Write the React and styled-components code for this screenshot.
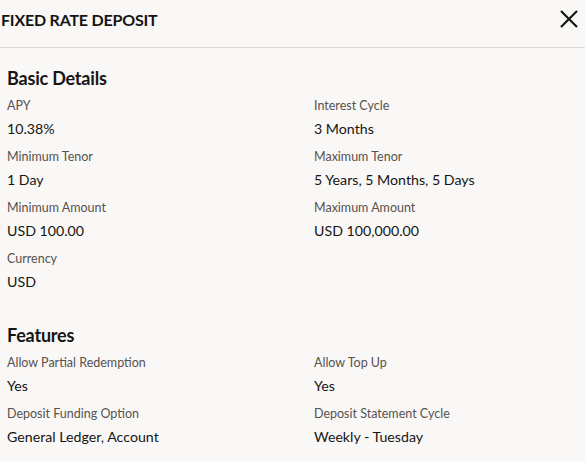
import React from "react";
import styled, { createGlobalStyle } from "styled-components";

const Global = createGlobalStyle`
  html, body { margin: 0; padding: 0; background: #f9f8f6; }
  body { font-family: Lato, "Noto Sans", sans-serif; color: #161513; }
`;

const Panel = styled.div`
  width: 585px;
  height: 462px;
  background: #f9f8f6;
  overflow: hidden;
`;

const Header = styled.div`
  display: flex;
  align-items: center;
  justify-content: space-between;
  box-sizing: border-box;
  height: 48px;
  padding: 0 6px 9px 1px;
  border-bottom: 1px solid #dedcd8;
`;

const Title = styled.h1`
  margin: 0;
  font-size: 16px;
  font-weight: 700;
  letter-spacing: -0.2px;
`;

const CloseButton = styled.button`
  background: none;
  border: none;
  padding: 0;
  width: 20px;
  height: 20px;
  display: flex;
  align-items: center;
  justify-content: center;
  cursor: pointer;
`;

const Body = styled.div`
  padding: 19px 0 0 7px;
`;

const Section = styled.section`
  margin-bottom: 33px;
`;

const SectionTitle = styled.h2`
  margin: 0 0 9px 0;
  font-size: 18px;
  font-weight: 700;
  line-height: 22px;
  letter-spacing: -0.2px;
`;

const Grid = styled.div`
  display: grid;
  grid-template-columns: 307px 1fr;
  row-gap: 11px;
`;

const Field = styled.div`
  display: flex;
  flex-direction: column;
  gap: 6px;
`;

const Label = styled.div`
  font-size: 12.5px;
  line-height: 16px;
  color: #57524e;
`;

const Value = styled.div`
  font-size: 14.2px;
  line-height: 18px;
  color: #161513;
`;

const basic = [
  ["APY", "10.38%"],
  ["Interest Cycle", "3 Months"],
  ["Minimum Tenor", "1 Day"],
  ["Maximum Tenor", "5 Years, 5 Months, 5 Days"],
  ["Minimum Amount", "USD 100.00"],
  ["Maximum Amount", "USD 100,000.00"],
  ["Currency", "USD"],
];

const features = [
  ["Allow Partial Redemption", "Yes"],
  ["Allow Top Up", "Yes"],
  ["Deposit Funding Option", "General Ledger, Account"],
  ["Deposit Statement Cycle", "Weekly - Tuesday"],
];

function Fields({ items }) {
  return (
    <Grid>
      {items.map(([l, v]) => (
        <Field key={l}>
          <Label>{l}</Label>
          <Value>{v}</Value>
        </Field>
      ))}
    </Grid>
  );
}

export default function App() {
  return (
    <Panel>
      <Global />
      <Header>
        <Title>FIXED RATE DEPOSIT</Title>
        <CloseButton aria-label="Close">
          <svg width="20" height="20" viewBox="0 0 20 20">
            <path d="M2 2 L18 18 M18 2 L2 18" stroke="#161513" strokeWidth="2.2" fill="none" />
          </svg>
        </CloseButton>
      </Header>
      <Body>
        <Section>
          <SectionTitle>Basic Details</SectionTitle>
          <Fields items={basic} />
        </Section>
        <Section>
          <SectionTitle>Features</SectionTitle>
          <Fields items={features} />
        </Section>
      </Body>
    </Panel>
  );
}
